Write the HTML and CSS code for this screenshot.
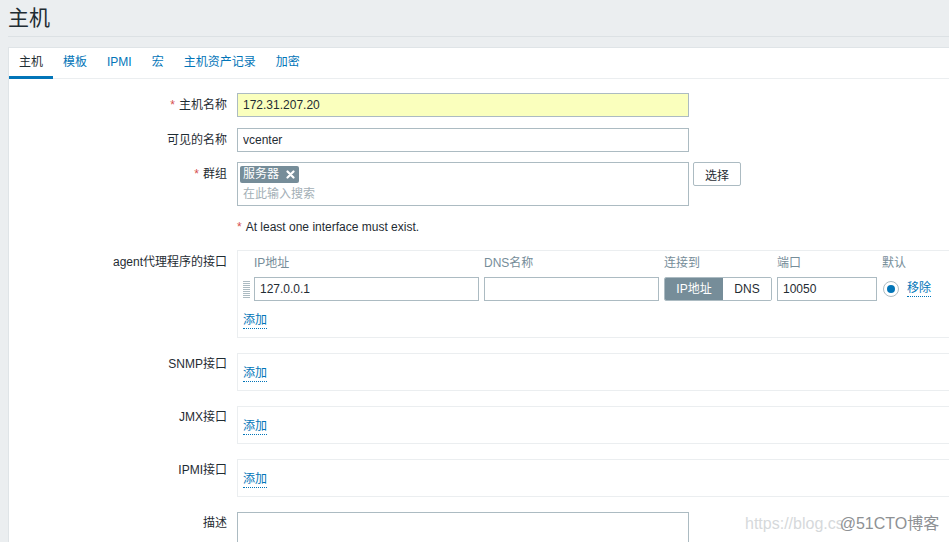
FILE: index.html
```html
<!DOCTYPE html>
<html lang="zh">
<head>
<meta charset="utf-8">
<title>主机</title>
<link rel="stylesheet" href="styles.css">
</head>
<body>
<div class="page">
  <header class="header"><h1 class="title">主机</h1></header>
  <main class="panel">
    <nav class="tabs">
      <span class="tab active">主机</span>
      <span class="tab">模板</span>
      <span class="tab">IPMI</span>
      <span class="tab">宏</span>
      <span class="tab">主机资产记录</span>
      <span class="tab">加密</span>
    </nav>
    <form class="form">
      <div class="row r1">
        <label class="label"><span class="req">*</span>主机名称</label>
        <div class="field"><input class="input autofill" value="172.31.207.20"></div>
      </div>
      <div class="row r2">
        <label class="label">可见的名称</label>
        <div class="field"><input class="input" value="vcenter"></div>
      </div>
      <div class="row r3">
        <label class="label"><span class="req">*</span>群组</label>
        <div class="field multi-wrap">
          <div class="multi">
            <span class="tag">服务器<svg class="tag-x" width="9" height="9" viewBox="0 0 9 9"><path d="M1.5 1.5L7.5 7.5M7.5 1.5L1.5 7.5" stroke="#fff" stroke-width="2.2" stroke-linecap="round"/></svg></span>
            <div class="placeholder">在此输入搜索</div>
          </div>
          <button type="button" class="btn">选择</button>
        </div>
      </div>
      <div class="row r4">
        <div class="label"></div>
        <div class="field msg"><span class="req">*</span>At least one interface must exist.</div>
      </div>
      <div class="row r5">
        <label class="label">agent代理程序的接口</label>
        <div class="field">
          <div class="ibox agent">
            <div class="igrid head">
              <span></span>
              <span>IP地址</span>
              <span>DNS名称</span>
              <span>连接到</span>
              <span>端口</span>
              <span>默认</span>
            </div>
            <div class="igrid vals">
              <svg class="handle" width="7" height="17" viewBox="0 0 7 17">
                <g fill="#acbbc2">
                  <rect x="0" y="0" width="7" height="1"/>
                  <rect x="0" y="2" width="7" height="1"/>
                  <rect x="0" y="4" width="7" height="1"/>
                  <rect x="0" y="6" width="7" height="1"/>
                  <rect x="0" y="8" width="7" height="1"/>
                  <rect x="0" y="10" width="7" height="1"/>
                  <rect x="0" y="12" width="7" height="1"/>
                  <rect x="0" y="14" width="7" height="1"/>
                  <rect x="0" y="16" width="7" height="1"/>
                </g>
              </svg>
              <input class="input full" value="127.0.0.1">
              <input class="input full" value="">
              <div class="toggle"><span class="seg on">IP地址</span><span class="seg">DNS</span></div>
              <input class="input full" value="10050">
              <div class="def"><span class="radio"><span class="dot"></span></span><a class="link">移除</a></div>
            </div>
            <div class="addrow"><a class="link">添加</a></div>
          </div>
        </div>
      </div>
      <div class="row r6">
        <label class="label lbl-box">SNMP接口</label>
        <div class="field"><div class="ibox small"><a class="link">添加</a></div></div>
      </div>
      <div class="row r6">
        <label class="label lbl-box">JMX接口</label>
        <div class="field"><div class="ibox small"><a class="link">添加</a></div></div>
      </div>
      <div class="row r6">
        <label class="label lbl-box">IPMI接口</label>
        <div class="field"><div class="ibox small"><a class="link">添加</a></div></div>
      </div>
      <div class="row">
        <label class="label lbl-box">描述</label>
        <div class="field"><textarea class="textarea"></textarea></div>
      </div>
    </form>
  </main>
</div>
<div class="watermark"><span class="wm-light">https://blog.cs</span><span class="wm-dark">@51CTO博客</span></div>
</body>
</html>
```

FILE: styles.css
```css
html, body {
  margin: 0;
  padding: 0;
}
body {
  width: 949px;
  height: 542px;
  overflow: hidden;
  position: relative;
  background: #ebeef0;
  color: #1f2c33;
  font: 12px "Liberation Sans", "Noto Sans CJK SC", sans-serif;
}
.page {
  padding-left: 8px;
  width: 941px;
  height: 542px;
  overflow: hidden;
}
.header {
  height: 36px;
  border-bottom: 1px solid #dce1e4;
}
.title {
  margin: 0;
  padding-top: 6px;
  font-size: 21px;
  line-height: 24px;
  font-weight: normal;
  color: #1f2c33;
}
.panel {
  margin-top: 10px;
  background: #fff;
  border: 1px solid #dfe4e7;
  border-right: none;
  height: 600px;
}
.tabs {
  display: flex;
  border-bottom: 1px solid #ebeef0;
}
.tab {
  padding: 1px 10px 0;
  line-height: 27px;
  border-bottom: 3px solid transparent;
  margin-bottom: -1px;
  color: #0275b8;
}
.tab.active {
  color: #1f2c33;
  border-bottom-color: #0275b8;
}
.form {
  padding-top: 14px;
}
.row {
  display: flex;
  align-items: flex-start;
}
.r1 { margin-bottom: 11px; }
.r2 { margin-bottom: 10px; }
.r3 { margin-bottom: 14px; }
.r4 { margin-bottom: 16px; }
.r5 { margin-bottom: 15px; }
.r6 { margin-bottom: 15px; }
.label {
  width: 218px;
  margin-right: 10px;
  text-align: right;
  line-height: 24px;
  flex: none;
}
.lbl-box {
  line-height: 22px;
}
.req {
  color: #d64e4e;
  margin-right: 4px;
}
.field {
  flex: none;
}
.input {
  box-sizing: border-box;
  width: 452px;
  height: 24px;
  border: 1px solid #acbbc2;
  border-radius: 0;
  padding: 0 5px;
  margin: 0;
  font: inherit;
  color: #1f2c33;
  background: #fff;
  outline: none;
  display: block;
}
.input.autofill {
  background: #faffbd;
}
.input.full {
  width: 100%;
}
.multi-wrap {
  display: flex;
  align-items: flex-start;
}
.multi {
  box-sizing: border-box;
  width: 452px;
  height: 44px;
  border: 1px solid #acbbc2;
  padding: 3px 2px 0;
}
.tag {
  display: inline-flex;
  align-items: center;
  height: 17px;
  padding: 0 4px 0 3px;
  background: #768d99;
  color: #fff;
  border-radius: 2px;
  line-height: 17px;
}
.tag-x {
  margin-left: 7px;
}
.placeholder {
  color: #a3afb6;
  padding-left: 3px;
  line-height: 19px;
  margin-top: 2px;
}
.btn {
  margin-left: 4px;
  box-sizing: border-box;
  width: 48px;
  height: 24px;
  border: 1px solid #acbbc2;
  border-radius: 2px;
  background: #fff;
  color: #1f2c33;
  font: inherit;
  padding: 0;
}
.msg {
  line-height: 14px;
}
.ibox {
  box-sizing: border-box;
  width: 712px;
  border: 1px solid #ebeef0;
  border-right: none;
}
.agent {
  height: 88px;
  padding: 3px 0 0 5px;
}
.igrid {
  display: grid;
  grid-template-columns: 6px 225px 175px 108px 100px 60px;
  column-gap: 5px;
  align-items: center;
}
.head {
  color: #768d99;
  line-height: 18px;
}
.vals {
  margin-top: 5px;
  height: 24px;
}
.handle {
  display: block;
}
.toggle {
  display: flex;
  height: 24px;
  box-sizing: border-box;
  border: 1px solid #acbbc2;
  border-radius: 2px;
  overflow: hidden;
}
.seg {
  flex: 1;
  text-align: center;
  line-height: 22px;
  color: #1f2c33;
  background: #fff;
}
.seg.on {
  flex: none;
  width: 58px;
  background: #768d99;
  color: #fff;
}
.def {
  display: flex;
  align-items: center;
  padding-left: 1px;
}
.radio {
  box-sizing: border-box;
  width: 16px;
  height: 16px;
  border: 1px solid #acbbc2;
  border-radius: 50%;
  display: flex;
  align-items: center;
  justify-content: center;
  margin-right: 8px;
}
.dot {
  width: 8px;
  height: 8px;
  border-radius: 50%;
  background: #0275b8;
}
.link {
  color: #0275b8;
  text-decoration: none;
  border-bottom: 1px dotted #0275b8;
  line-height: 15px;
  display: inline-block;
}
.addrow {
  margin-top: 12px;
}
.small {
  height: 38px;
  padding: 12px 0 0 5px;
}
.textarea {
  box-sizing: border-box;
  width: 452px;
  height: 30px;
  border: 1px solid #acbbc2;
  border-bottom: none;
  margin: 0;
  display: block;
  resize: none;
  font: inherit;
}
.watermark {
  position: absolute;
  left: 745px;
  top: 514px;
  font-size: 16px;
  line-height: 20px;
  white-space: nowrap;
  font-family: "Liberation Sans", "Noto Sans CJK SC", sans-serif;
}
.wm-light {
  color: #d6d9db;
}
.wm-dark {
  color: #8e9194;
  margin-left: -4px;
}
```
